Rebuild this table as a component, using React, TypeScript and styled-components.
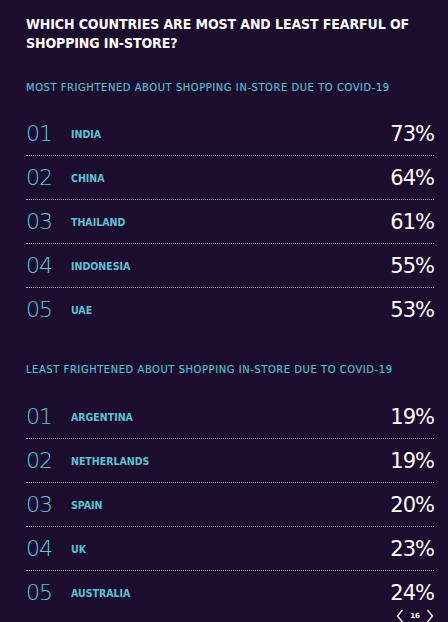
import React from "react";
import styled, { createGlobalStyle } from "styled-components";

const Global = createGlobalStyle`
  html, body { margin: 0; padding: 0; background: #1c0d2e; overflow: hidden; }
  body { width: 448px; height: 622px; }
`;

const Page = styled.div`
  width: 448px;
  height: 622px;
  box-sizing: border-box;
  padding: 15px 14px 0 26px;
  background: #1c0d2e;
  display: flex;
  flex-direction: column;
  position: relative;
  overflow: hidden;
`;

const Title = styled.h1`
  margin: 0;
  font-family: "DejaVu Sans Condensed", "DejaVu Sans", sans-serif;
  font-weight: bold;
  font-size: 14px;
  line-height: 19px;
  color: #ffffff;
  letter-spacing: -0.1px;
`;

const Subtitle = styled.h2<{ $top: number }>`
  margin: ${(p) => p.$top}px 0 0 0;
  font-family: "DejaVu Sans Condensed", "DejaVu Sans", sans-serif;
  font-weight: normal;
  font-size: 11px;
  line-height: 14px;
  color: #55bccc;
  letter-spacing: 0.6px;
  -webkit-text-stroke: 0.2px #55bccc;
`;

const List = styled.div<{ $top: number }>`
  margin-top: ${(p) => p.$top}px;
  display: flex;
  flex-direction: column;
`;

const Row = styled.div<{ $last?: boolean }>`
  height: 44px;
  box-sizing: border-box;
  display: flex;
  align-items: center;
  border-bottom: ${(p) => (p.$last ? "1px solid transparent" : "1px dotted #7fb4c6")};
`;

const Rank = styled.span`
  width: 45px;
  font-family: "DejaVu Sans", sans-serif;
  font-weight: 200;
  font-size: 22px;
  color: #63c3d8;
  letter-spacing: -1px;
`;

const Country = styled.span`
  flex: 1;
  font-family: "DejaVu Sans Condensed", "DejaVu Sans", sans-serif;
  font-weight: bold;
  font-size: 10.5px;
  color: #5ec2d4;
  letter-spacing: 0;
`;

const Pct = styled.span`
  font-family: "DejaVu Sans", sans-serif;
  font-weight: normal;
  font-size: 21px;
  color: #ffffff;
  letter-spacing: -1px;
`;

const Pager = styled.div`
  position: absolute;
  right: 14px;
  top: 609px;
  display: flex;
  align-items: center;
  gap: 6px;
  color: #ffffff;
  font-family: "DejaVu Sans", sans-serif;
`;

const PageNum = styled.span`
  font-size: 7px;
  font-weight: bold;
`;

const Chevron = ({ dir }: { dir: "l" | "r" }) => (
  <svg width="8" height="14" viewBox="0 0 8 14">
    <path
      d={dir === "l" ? "M6.5 1 L1.5 7 L6.5 13" : "M1.5 1 L6.5 7 L1.5 13"}
      fill="none"
      stroke="#ffffff"
      strokeWidth="1.3"
    />
  </svg>
);

const most = [
  ["01", "INDIA", "73%"],
  ["02", "CHINA", "64%"],
  ["03", "THAILAND", "61%"],
  ["04", "INDONESIA", "55%"],
  ["05", "UAE", "53%"],
];
const least = [
  ["01", "ARGENTINA", "19%"],
  ["02", "NETHERLANDS", "19%"],
  ["03", "SPAIN", "20%"],
  ["04", "UK", "23%"],
  ["05", "AUSTRALIA", "24%"],
];

const Table = ({ rows, top }: { rows: string[][]; top: number }) => (
  <List $top={top}>
    {rows.map((r, i) => (
      <Row key={r[0]} $last={i === rows.length - 1}>
        <Rank>{r[0]}</Rank>
        <Country>{r[1]}</Country>
        <Pct>{r[2]}</Pct>
      </Row>
    ))}
  </List>
);

export default function App() {
  return (
    <>
      <Global />
      <Page>
        <Title>
          WHICH COUNTRIES ARE MOST AND LEAST FEARFUL OF
          <br />
          SHOPPING IN-STORE?
        </Title>
        <Subtitle $top={28}>MOST FRIGHTENED ABOUT SHOPPING IN-STORE DUE TO COVID-19</Subtitle>
        <Table rows={most} top={17} />
        <Subtitle $top={31}>LEAST FRIGHTENED ABOUT SHOPPING IN-STORE DUE TO COVID-19</Subtitle>
        <Table rows={least} top={18} />
        <Pager>
          <Chevron dir="l" />
          <PageNum>16</PageNum>
          <Chevron dir="r" />
        </Pager>
      </Page>
    </>
  );
}
